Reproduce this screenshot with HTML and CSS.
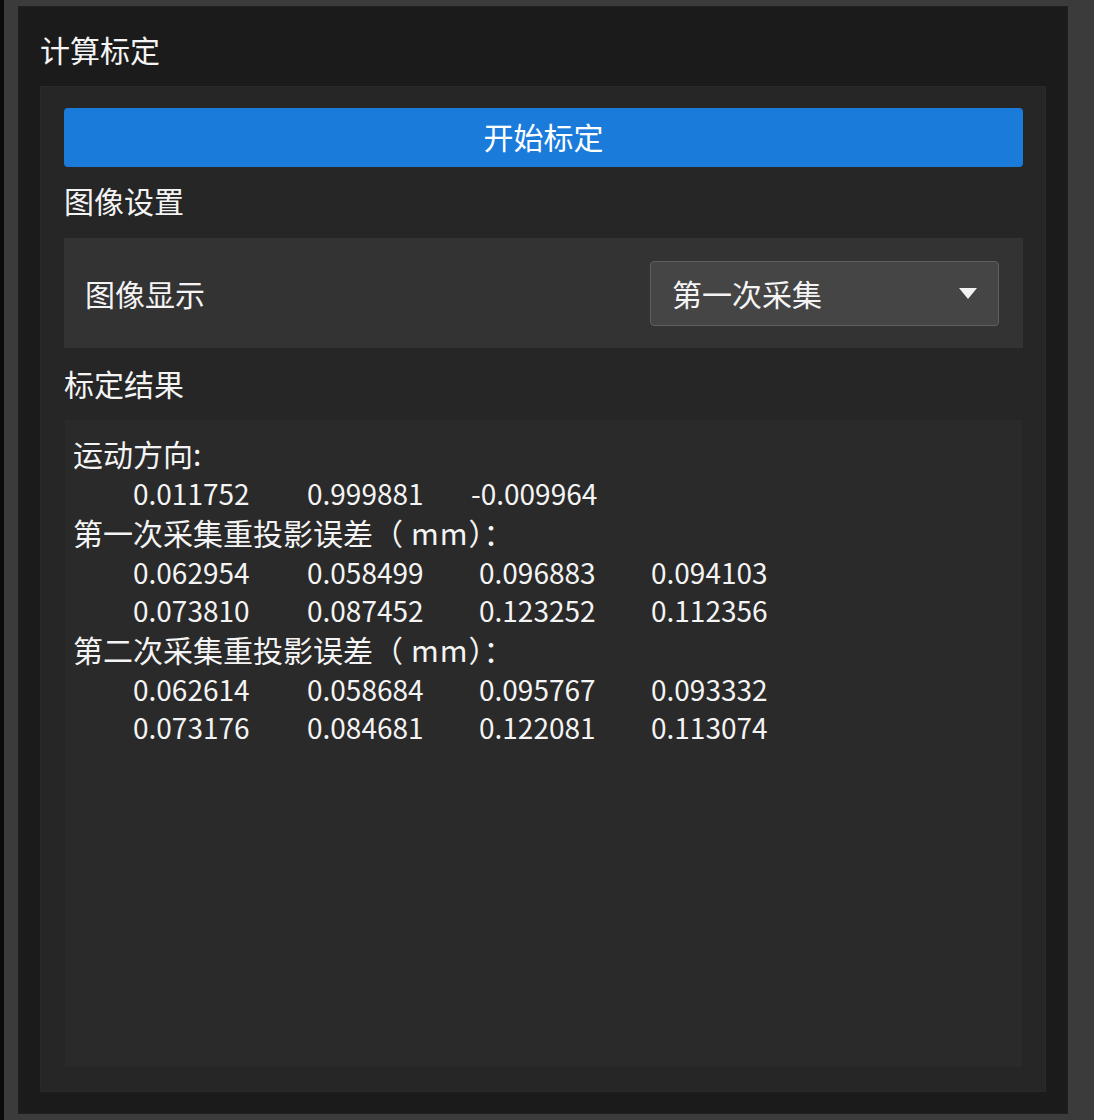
FILE: index.html
```html
<!DOCTYPE html>
<html lang="zh-CN">
<head>
<meta charset="utf-8">
<title>计算标定</title>
<link rel="stylesheet" href="styles.css">
</head>
<body>
<div class="screen">
  <div class="window">
    <div class="title">计算标定</div>
    <div class="panel">
      <button class="primary">开始标定</button>
      <div class="section-title first">图像设置</div>
      <div class="field-row">
        <span class="field-label">图像显示</span>
        <div class="select">
          <span class="select-text">第一次采集</span>
          <svg class="select-arrow" width="18" height="11" viewBox="0 0 18 11"><path d="M0 0 H18 L9 11 Z" fill="#f2f2f2"/></svg>
        </div>
      </div>
      <div class="section-title">标定结果</div>
      <div class="results">
        <div class="line">运动方向:</div>
        <div class="nums"><span>0.011752</span><span>0.999881</span><span class="neg">-0.009964</span></div>
        <div class="line">第一次采集重投影误差（<span class="unit">mm</span><span class="tc">）：</span></div>
        <div class="nums"><span>0.062954</span><span>0.058499</span><span>0.096883</span><span>0.094103</span></div>
        <div class="nums"><span>0.073810</span><span>0.087452</span><span>0.123252</span><span>0.112356</span></div>
        <div class="line">第二次采集重投影误差（<span class="unit">mm</span><span class="tc">）：</span></div>
        <div class="nums"><span>0.062614</span><span>0.058684</span><span>0.095767</span><span>0.093332</span></div>
        <div class="nums"><span>0.073176</span><span>0.084681</span><span>0.122081</span><span>0.113074</span></div>
      </div>
    </div>
  </div>
</div>
</body>
</html>
```

FILE: styles.css
```css
* { box-sizing: border-box; }

html, body {
  margin: 0;
  padding: 0;
  background: #3b3b3b;
}

body {
  font-family: "Noto Sans CJK SC", "Noto Sans", sans-serif;
  font-size: 30px;
  color: #f4f4f4;
}

.screen {
  width: 1094px;
  height: 1120px;
  display: flex;
  background: #3b3b3b;
  border-left: 4px solid #0b0b0b;
  padding: 6px 26px 6px 14px;
}

.window {
  width: 1050px;
  display: flex;
  flex-direction: column;
  background: #1b1b1b;
  border: 1px solid #202020;
  padding: 22px 21px 21px 21px;
}

.title {
  line-height: 40px;
  margin-bottom: 17px;
}

.panel {
  flex: 1;
  display: flex;
  flex-direction: column;
  background: #262626;
  border: 1px solid #2a2a2a;
  padding: 21px 22px 24px 23px;
}

.primary {
  height: 59px;
  border: none;
  border-radius: 4px;
  background: #1a7bdb;
  color: #ffffff;
  font-family: inherit;
  font-size: 30px;
  padding: 0 0 3px 0;
  line-height: 40px;
}

.section-title {
  line-height: 40px;
  padding: 15px 0 17px 0;
}

.section-title.first {
  padding: 13px 0 18px 0;
}

.field-row {
  height: 110px;
  display: flex;
  align-items: center;
  justify-content: space-between;
  background: #333333;
  padding: 0 24px 0 21px;
}

.field-label {
  line-height: 40px;
}

.select {
  width: 349px;
  height: 65px;
  display: flex;
  align-items: center;
  justify-content: space-between;
  background: #454545;
  border: 1px solid #5e5e5e;
  border-radius: 4px;
  padding: 0 21px 0 21px;
}

.select-text {
  line-height: 40px;
}

.results {
  flex: 1;
  margin: 0 1px 0 1px;
  background: #2a2a2a;
  padding: 13px 8px 0 8px;
}

.line {
  line-height: 41px;
}

.unit {
  margin-left: 8px;
  letter-spacing: 1px;
}

.tc {
  font-family: "Noto Sans CJK TC", "Noto Sans CJK SC", sans-serif;
}

.nums {
  display: grid;
  grid-template-columns: 174px 172px 172px auto;
  padding-left: 60px;
  font-size: 28px;
  line-height: 38px;
}

.neg {
  margin-left: -8px;
}
```
